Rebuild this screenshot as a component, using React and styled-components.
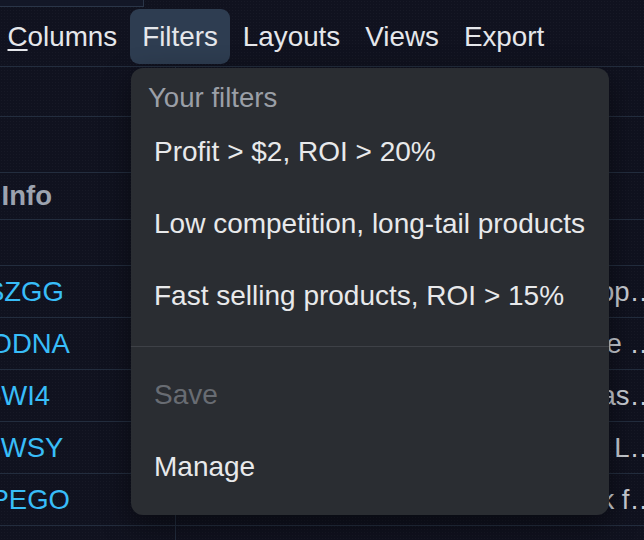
import React from "react";
import styled, { createGlobalStyle } from "styled-components";

const GlobalStyle = createGlobalStyle`
  html, body {
    margin: 0;
    padding: 0;
    overflow: hidden;
    background: #10121f;
  }
  body {
    font-family: "Liberation Sans", Arial, sans-serif;
  }
`;

const Page = styled.div`
  position: relative;
  width: 644px;
  height: 540px;
  overflow: hidden;
  background-color: #10121f;
  background-image: radial-gradient(rgba(255, 255, 255, 0.03) 0.7px, transparent 1px);
  background-size: 3px 3px;
  color: #e5e7eb;
`;

const SearchBox = styled.div`
  width: 150px;
  height: 7px;
  margin-left: -6px;
  box-sizing: border-box;
  border: 1px solid #2a3548;
  border-top: none;
  background: #131727;
`;

const Toolbar = styled.div`
  display: flex;
  align-items: center;
  height: 60px;
  margin-left: -5px;
  box-sizing: border-box;
  border-bottom: 1px solid #232d3e;
`;

const ToolButton = styled.button`
  all: unset;
  box-sizing: border-box;
  display: flex;
  align-items: center;
  height: 55px;
  padding: 0 12.5px;
  border-radius: 9px;
  font-size: 27.8px;
  line-height: 36px;
  color: #e5e7eb;
  cursor: pointer;
  background: ${(props) => (props.$active ? "#2e3d51" : "transparent")};

  u {
    text-underline-offset: 3px;
  }
`;

const Table = styled.div`
  margin-left: -130px;
  width: 820px;
`;

const Row = styled.div`
  display: flex;
  height: ${(props) => props.$h || 52}px;
  box-sizing: border-box;
  border-bottom: 1px solid #232d3e;
`;

const AsinCell = styled.div`
  flex: none;
  display: flex;
  align-items: center;
  width: 306px;
  box-sizing: border-box;
  padding-left: ${(props) => props.$pad || 12}px;
  border-right: 1px solid #232d3e;
  font-size: 27.5px;
  line-height: 36px;
  white-space: nowrap;
  overflow: hidden;
  color: ${(props) => (props.$header ? "#9ca3af" : "#38bdf8")};
  font-weight: ${(props) => (props.$header ? 700 : 400)};
`;

const TitleCell = styled.div`
  flex: none;
  display: flex;
  align-items: center;
  justify-content: flex-end;
  width: 493px;
  box-sizing: border-box;
  padding-right: 12px;
  font-size: 27.5px;
  line-height: 36px;
  white-space: nowrap;
  overflow: hidden;
  color: #c9cdd4;
`;

const Menu = styled.div`
  position: absolute;
  left: 131px;
  top: 68px;
  width: 478px;
  box-sizing: border-box;
  padding: 12px 0;
  background: #2a2d32;
  border-radius: 12px;
  box-shadow: 0 10px 30px rgba(0, 0, 0, 0.45);
`;

const MenuLabel = styled.div`
  padding: 0 17px;
  font-size: 27.6px;
  line-height: 36px;
  color: #9a9fa7;
`;

const MenuItem = styled.div`
  padding: 18px 23px;
  font-size: 28px;
  line-height: 36px;
  color: ${(props) => (props.$disabled ? "#686c73" : "#e8e9eb")};
  cursor: ${(props) => (props.$disabled ? "default" : "pointer")};
`;

const Divider = styled.div`
  height: 1px;
  margin: 14px 0 12px;
  background: #3e4147;
`;

const products = [
  { asin: "B0C71HSZGG", title: "Adjustable Aluminum Laptop Stand for Desktop…" },
  { asin: "B0D9RHODNA", title: "Premium Non-Slip Yoga Mat for Home Exercise …" },
  { asin: "B09HKT5WI4", title: "Waterproof Heavy Duty Storage Tote Canvas…" },
  { asin: "B07FRV3WSY", title: "Stainless Steel Water Bottle, 32 oz, Leak-Proof L…" },
  { asin: "B0BXDKPEGO", title: "Ergonomic Memory Foam Seat Cushion, Back f…" },
  { asin: "B0CQ2MJ7TR", title: "Silicone Kitchen Utensil Set, Heat Resistant…" },
];

const filters = [
  "Profit > $2, ROI > 20%",
  "Low competition, long-tail products",
  "Fast selling products, ROI > 15%",
];

export default function App() {
  return (
    <Page>
      <GlobalStyle />
      <SearchBox />
      <Toolbar>
        <ToolButton>
          <span>
            <u>C</u>olumns
          </span>
        </ToolButton>
        <ToolButton $active>Filters</ToolButton>
        <ToolButton>Layouts</ToolButton>
        <ToolButton>Views</ToolButton>
        <ToolButton>Export</ToolButton>
      </Toolbar>

      <Table>
        <Row $h={50}>
          <AsinCell />
          <TitleCell />
        </Row>
        <Row $h={56}>
          <AsinCell />
          <TitleCell />
        </Row>
        <Row $h={47}>
          <AsinCell $header $pad={20}>
            Product Info
          </AsinCell>
          <TitleCell />
        </Row>
        <Row $h={46}>
          <AsinCell />
          <TitleCell />
        </Row>
        {products.map((p) => (
          <Row key={p.asin}>
            <AsinCell>{p.asin}</AsinCell>
            <TitleCell>
              <span>{p.title}</span>
            </TitleCell>
          </Row>
        ))}
      </Table>

      <Menu>
        <MenuLabel>Your filters</MenuLabel>
        {filters.map((f) => (
          <MenuItem key={f}>{f}</MenuItem>
        ))}
        <Divider />
        <MenuItem $disabled>Save</MenuItem>
        <MenuItem>Manage</MenuItem>
      </Menu>
    </Page>
  );
}
